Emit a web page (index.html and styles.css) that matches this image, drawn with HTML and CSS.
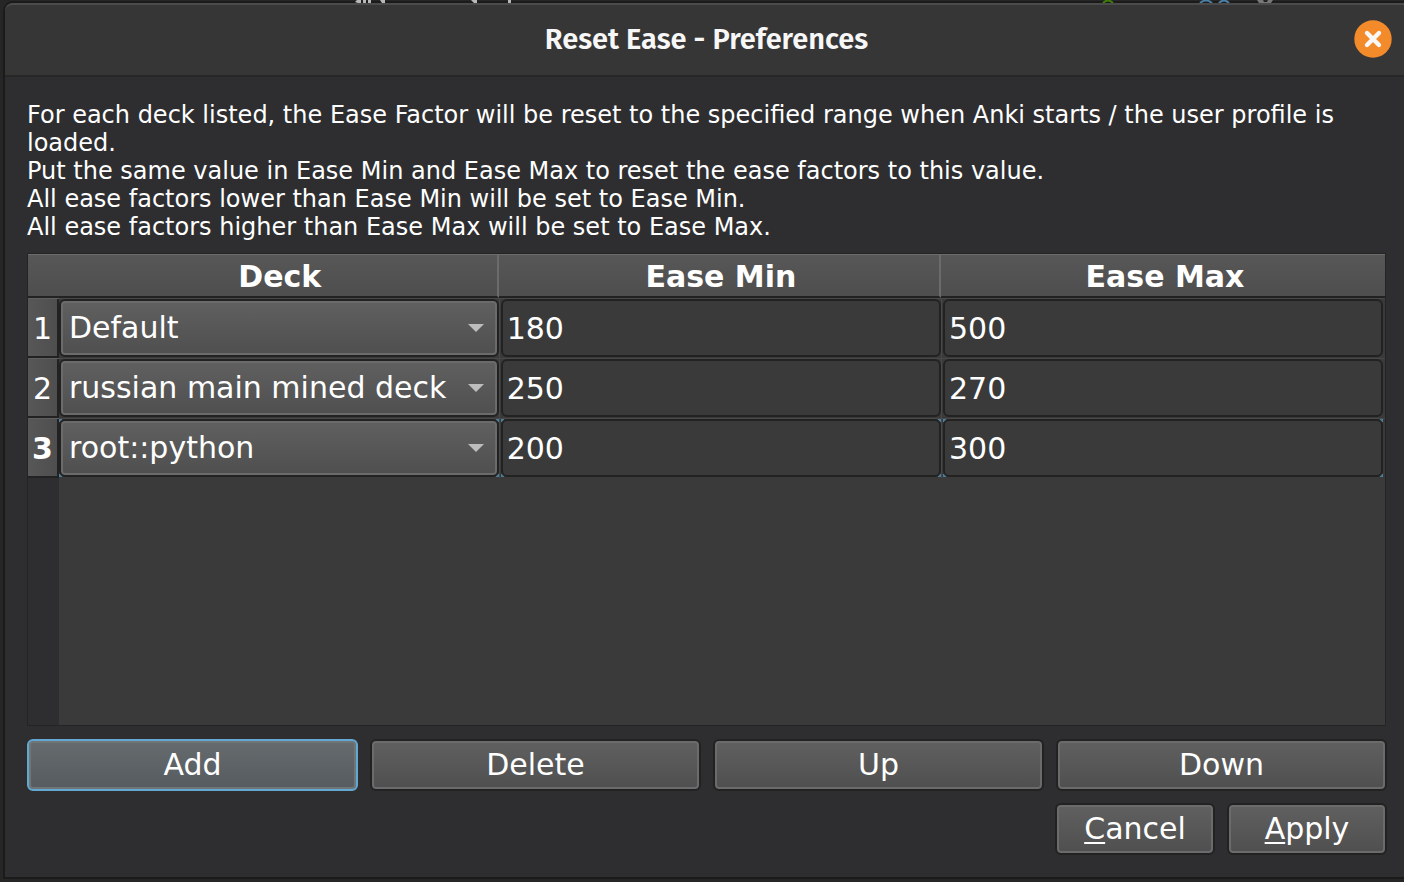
FILE: index.html
```html
<!DOCTYPE html>
<html lang="en">
<head>
<meta charset="utf-8">
<title>Reset Ease - Preferences</title>
<link rel="stylesheet" href="styles.css">
</head>
<body>
<svg class="backdrop" width="1404" height="3" viewBox="0 0 1404 3" aria-hidden="true">
  <g fill="#b8bab8">
    <path d="M355 2l2-2h4v3h-3zM363 0h3v3h-3zM368 0h3v3h-3zM380 0h5v3h-3zM471 0h6v3h-3zM508 0h3v3h-3z"/>
    <path fill="#777" d="M1257 0h6l1 2h3l1-2h5l-2 3h-12z"/>
  </g>
  <g fill="none" stroke-width="2">
    <path stroke="#3f7d08" d="M1103 3q5-5 10 0"/>
    <path stroke="#4c80a6" d="M1200 3q6-5 12 0M1219 3q5-5 10 0"/>
  </g>
</svg>
<main class="window">
  <header class="titlebar">
    <h1 class="title">Reset Ease - Preferences</h1>
    <button class="close" type="button" aria-label="Close">
      <svg width="38" height="38" viewBox="0 0 38 38" aria-hidden="true">
        <circle cx="19" cy="19" r="18.7" fill="#f38b2b"/>
        <path d="M13 13L25 25M25 13L13 25" stroke="#f8f8f8" stroke-width="4.4" stroke-linecap="round"/>
      </svg>
    </button>
  </header>
  <form class="content">
    <p class="description">For each deck listed, the Ease Factor will be reset to the specified range when Anki starts / the user profile is loaded.<br>Put the same value in Ease Min and Ease Max to reset the ease factors to this value.<br>All ease factors lower than Ease Min will be set to Ease Min.<br>All ease factors higher than Ease Max will be set to Ease Max.</p>
    <div class="frame">
      <table class="decks">
        <colgroup><col class="col-index"><col class="col-deck"><col class="col-min"><col></colgroup>
        <thead>
          <tr><td></td><th scope="col">Deck</th><th scope="col">Ease Min</th><th scope="col">Ease Max</th></tr>
        </thead>
        <tbody>
          <tr>
            <th scope="row">1</th>
            <td><div class="combo"><select aria-label="Deck 1"><option>Default</option></select><svg class="arrow" width="16" height="8" viewBox="0 0 16 8" aria-hidden="true"><path d="M0 0h16L8 8z"/></svg></div></td>
            <td><input type="text" aria-label="Ease Min 1" value="180"></td>
            <td><input type="text" aria-label="Ease Max 1" value="500"></td>
          </tr>
          <tr>
            <th scope="row">2</th>
            <td><div class="combo"><select aria-label="Deck 2"><option>russian main mined deck</option></select><svg class="arrow" width="16" height="8" viewBox="0 0 16 8" aria-hidden="true"><path d="M0 0h16L8 8z"/></svg></div></td>
            <td><input type="text" aria-label="Ease Min 2" value="250"></td>
            <td><input type="text" aria-label="Ease Max 2" value="270"></td>
          </tr>
          <tr class="current">
            <th scope="row">3</th>
            <td><div class="combo"><select aria-label="Deck 3"><option>root::python</option></select><svg class="arrow" width="16" height="8" viewBox="0 0 16 8" aria-hidden="true"><path d="M0 0h16L8 8z"/></svg></div></td>
            <td><input type="text" aria-label="Ease Min 3" value="200"></td>
            <td><input type="text" aria-label="Ease Max 3" value="300"></td>
          </tr>
        </tbody>
      </table>
    </div>
    <div class="row-actions">
      <button class="btn focused" type="button">Add</button>
      <button class="btn" type="button">Delete</button>
      <button class="btn" type="button">Up</button>
      <button class="btn" type="button">Down</button>
    </div>
    <div class="dialog-actions">
      <button class="btn" type="button"><span class="mnemonic">C</span>ancel</button>
      <button class="btn" type="button"><span class="mnemonic">A</span>pply</button>
    </div>
  </form>
</main>
</body>
</html>
```
FILE: styles.css
```css
* { box-sizing: border-box; }

body {
  margin: 0;
  min-height: 100vh;
  display: flex;
  padding: 1px 0 3px 3px;
  background: #262627;
  color: #fff;
  font-family: "DejaVu Sans", sans-serif;
  font-size: 30px;
}

.backdrop {
  position: absolute;
  z-index: 1;
  top: 0;
  left: 0;
}

.window {
  flex: 1;
  min-width: 0;
  display: flex;
  flex-direction: column;
  border: 2px solid #1b1b1b;
  border-right: 0;
  border-radius: 10px 0 0 0;
  background: #2e2e30;
}

.titlebar {
  display: grid;
  grid-template-columns: 1fr auto 1fr;
  align-items: center;
  height: 74px;
  padding: 0 12px 2px 16px;
  border-top: 2px solid #4b4b4b;
  border-bottom: 2px solid #262626;
  border-radius: 8px 0 0 0;
  background: #363636;
}

.title {
  grid-column: 2;
  margin: 0;
  padding-top: 2px;
  font: 600 29px/36px "Fira Sans", Roboto, sans-serif;
  color: #f7f7f7;
}

.close {
  justify-self: end;
  display: flex;
  padding: 0;
  border: 0;
  background: none;
}

.content {
  flex: 1;
  display: flex;
  flex-direction: column;
  gap: 12px;
  padding: 24px 17px 22px 22px;
}

.description {
  margin: 0;
  font-size: 24px;
  line-height: 28px;
}

.frame {
  flex: 1;
  margin: 0 1px 1px 0;
  border: 1px solid #242424;
  background: linear-gradient(90deg, #2e2e30 31px, #3a3a3a 31px);
}

.decks {
  width: 100%;
  table-layout: fixed;
  border-collapse: separate;
  border-spacing: 0;
}

.col-index { width: 31px; }
.col-deck { width: 32.4%; }
.col-min { width: 32.6%; }

.decks td, .decks th { padding: 0; }

.decks thead td, .decks thead th {
  height: 44px;
  padding: 2px 0 0 4px;
  border-top: 1px solid #6b6b6b;
  border-bottom: 2px solid #222;
  background: linear-gradient(#575757, #4e4e4e);
  line-height: 36px;
}

.decks thead th:not(:last-child) {
  border-right: 2px solid #6b6b6b;
}

.decks tbody th {
  padding-right: 2px;
  border-top: 1px solid #5f5f5f;
  box-shadow: inset -2px -2px #222;
  background: linear-gradient(90deg, #575757, #4e4e4e);
  font-weight: 400;
  text-align: center;
}

.decks tbody .current th { font-weight: 700; }

.decks tbody td {
  height: 60px;
  border-top: 1px solid #484848;
  vertical-align: top;
}

.decks tbody td + td {
  padding-left: 1px;
  border-left: 1px solid #484848;
}

.decks tbody td:last-child { padding-right: 2px; }

.current td {
  background:
    linear-gradient(#4f7c98, #4f7c98) 0 0 / 3px 3px no-repeat,
    linear-gradient(#4f7c98, #4f7c98) 100% 0 / 3px 3px no-repeat,
    linear-gradient(#4f7c98, #4f7c98) 0 55px / 3px 3px no-repeat,
    linear-gradient(#4f7c98, #4f7c98) 100% 55px / 3px 3px no-repeat;
  background-clip: content-box;
  background-origin: content-box;
}

.decks input, .combo select {
  display: block;
  width: 100%;
  height: 58px;
  margin: 0;
  border: 2px solid #222;
  border-radius: 6px;
  color: #fff;
  font: inherit;
}

.decks input {
  padding: 0 4px;
  background: #3a3a3a;
}

.combo {
  position: relative;
}

.combo select {
  appearance: none;
  padding: 0 30px 2px 8px;
  background: linear-gradient(#606060, #4f4f4f);
  box-shadow: inset 0 0 0 2px #6b6b6b;
}

.arrow {
  position: absolute;
  top: 25px;
  right: 15px;
  fill: #bdbdbd;
  pointer-events: none;
}

.row-actions {
  display: grid;
  grid-template-columns: repeat(4, 1fr);
  gap: 12px;
}

.dialog-actions {
  display: flex;
  justify-content: flex-end;
  gap: 12px;
}

.dialog-actions .btn { width: 160px; }

.btn {
  height: 52px;
  padding: 0 0 2px;
  border: 2px solid #222;
  border-radius: 6px;
  background: linear-gradient(#606060, #4f4f4f);
  box-shadow: inset 0 0 0 2px #6b6b6b;
  color: #fff;
  font: inherit;
}

.btn.focused {
  border-color: #62a8d2;
  background: linear-gradient(#666b6e, #565b5f);
  box-shadow: inset 0 0 0 2px #707578;
}

.mnemonic {
  text-decoration: underline;
  text-decoration-thickness: 2px;
  text-underline-offset: 3px;
}
```
